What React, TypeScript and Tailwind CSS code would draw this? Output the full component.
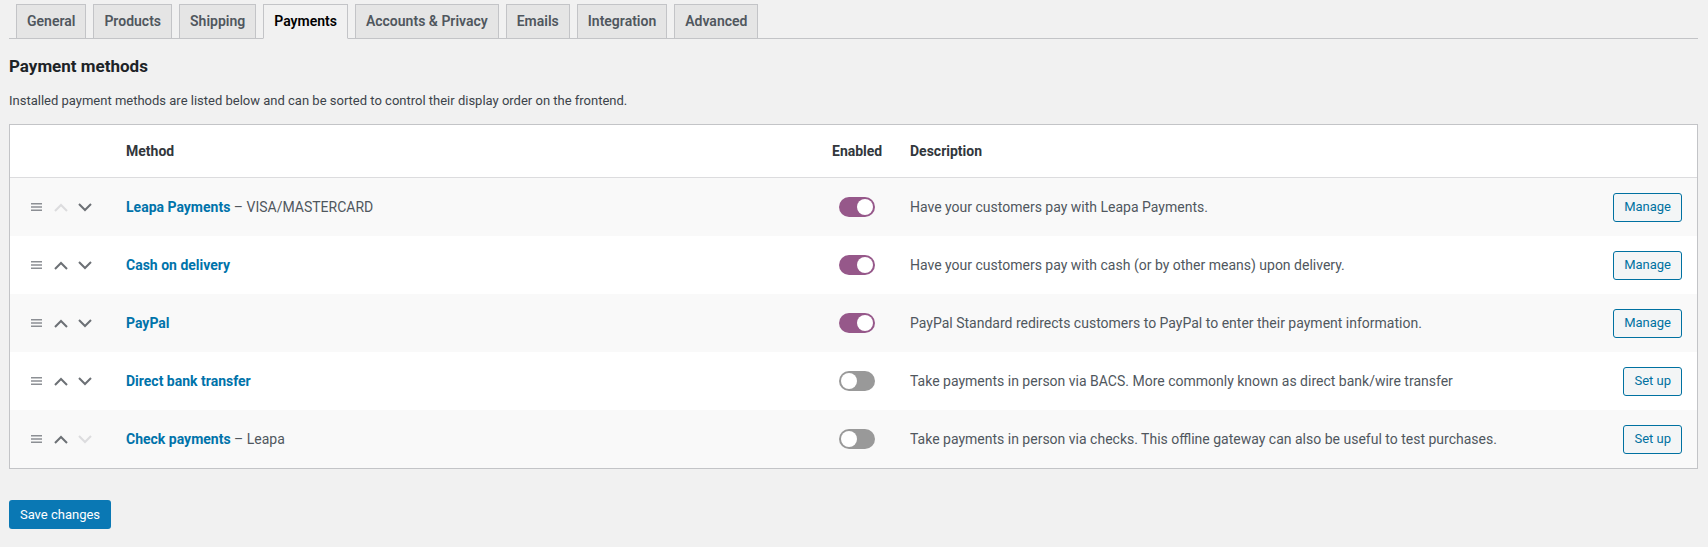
import { useState } from 'react';

type Method = {
  name: string;
  suffix?: string;
  enabled: boolean;
  description: string;
  action: 'Manage' | 'Set up';
};

const TABS = [
  'General',
  'Products',
  'Shipping',
  'Payments',
  'Accounts & Privacy',
  'Emails',
  'Integration',
  'Advanced',
];

const METHODS: Method[] = [
  {
    name: 'Leapa Payments',
    suffix: 'VISA/MASTERCARD',
    enabled: true,
    description: 'Have your customers pay with Leapa Payments.',
    action: 'Manage',
  },
  {
    name: 'Cash on delivery',
    enabled: true,
    description: 'Have your customers pay with cash (or by other means) upon delivery.',
    action: 'Manage',
  },
  {
    name: 'PayPal',
    enabled: true,
    description: 'PayPal Standard redirects customers to PayPal to enter their payment information.',
    action: 'Manage',
  },
  {
    name: 'Direct bank transfer',
    enabled: false,
    description: 'Take payments in person via BACS. More commonly known as direct bank/wire transfer',
    action: 'Set up',
  },
  {
    name: 'Check payments',
    suffix: 'Leapa',
    enabled: false,
    description: 'Take payments in person via checks. This offline gateway can also be useful to test purchases.',
    action: 'Set up',
  },
];

function Handle() {
  return (
    <svg width="11" height="8" viewBox="0 0 11 8" className="text-[#8c8f94]">
      <path d="M0 0.75h11M0 4h11M0 7.25h11" stroke="currentColor" strokeWidth="1.3" />
    </svg>
  );
}

function Chevron({ up, disabled }: { up?: boolean; disabled?: boolean }) {
  return (
    <svg
      width="14"
      height="9"
      viewBox="0 0 14 9"
      className={disabled ? 'text-[#dcdcde]' : 'text-[#6c7075]'}
    >
      <polyline
        points={up ? '1,8 7,2 13,8' : '1,1 7,7 13,1'}
        fill="none"
        stroke="currentColor"
        strokeWidth="2"
      />
    </svg>
  );
}

function Toggle({ on }: { on: boolean }) {
  return (
    <span
      className={`flex w-[36px] h-[20px] rounded-full p-[2px] ${
        on ? 'bg-[#96588a] justify-end' : 'bg-[#999999] justify-start'
      }`}
    >
      <span className="w-[16px] h-[16px] rounded-full bg-white" />
    </span>
  );
}

export default function App() {
  const [active] = useState('Payments');

  return (
    <div className="min-h-screen bg-[#f1f1f1] pl-[9px] pr-[10px] pt-[4px] font-['Roboto',sans-serif]">
      <nav className="flex gap-[7px] pl-[7px] border-b border-[#c3c4c7]">
        {TABS.map(t => (
          <span
            key={t}
            className={`-mb-px h-[35px] px-[10px] border text-[14px] leading-[33px] font-semibold ${
              t === active
                ? 'bg-[#f1f1f1] border-[#c3c4c7] border-b-[#f1f1f1] text-black'
                : 'bg-[#e5e5e5] border-[#c3c4c7] text-[#50575e]'
            }`}
          >
            {t}
          </span>
        ))}
      </nav>

      <h2 className="mt-[16px] text-[17px] leading-[23px] font-bold text-[#1d2327]">
        Payment methods
      </h2>
      <p className="mt-[14px] text-[13px] leading-[18px] text-[#3c434a]">
        Installed payment methods are listed below and can be sorted to control their display order on the frontend.
      </p>

      <div className="mt-[14px] border border-[#c3c4c7] bg-white text-[14px]">
        <div className="flex items-center h-[53px] border-b border-[#dcdcde] font-bold text-[#32373c]">
          <div className="w-[116px]" />
          <div className="w-[706px]">Method</div>
          <div className="w-[49px] text-center">Enabled</div>
          <div className="ml-[29px] flex-1">Description</div>
        </div>

        {METHODS.map((m, i) => (
          <div
            key={m.name}
            className={`flex items-center h-[58px] ${i % 2 === 0 ? 'bg-[#f9f9f9]' : 'bg-white'}`}
          >
            <div className="w-[116px] pl-[21px] flex items-center">
              <Handle />
              <span className="ml-[12px]">
                <Chevron up disabled={i === 0} />
              </span>
              <span className="ml-[10px]">
                <Chevron disabled={i === METHODS.length - 1} />
              </span>
            </div>
            <div className="w-[706px] text-[#50575e]">
              <a className="font-bold text-[#0073aa]">{m.name}</a>
              {m.suffix && <span> – {m.suffix}</span>}
            </div>
            <div className="w-[49px] flex justify-center">
              <Toggle on={m.enabled} />
            </div>
            <div className="ml-[29px] flex-1 text-[#50575e]">{m.description}</div>
            <div className="pr-[15px]">
              <button className="h-[29px] px-[10px] rounded-[3px] border border-[#0071a1] bg-[#f3f5f6] text-[13px] text-[#0071a1]">
                {m.action}
              </button>
            </div>
          </div>
        ))}
      </div>

      <button className="mt-[31px] h-[29px] w-[102px] rounded-[3px] bg-[#0a78b4] text-[13px] text-white">
        Save changes
      </button>
    </div>
  );
}
